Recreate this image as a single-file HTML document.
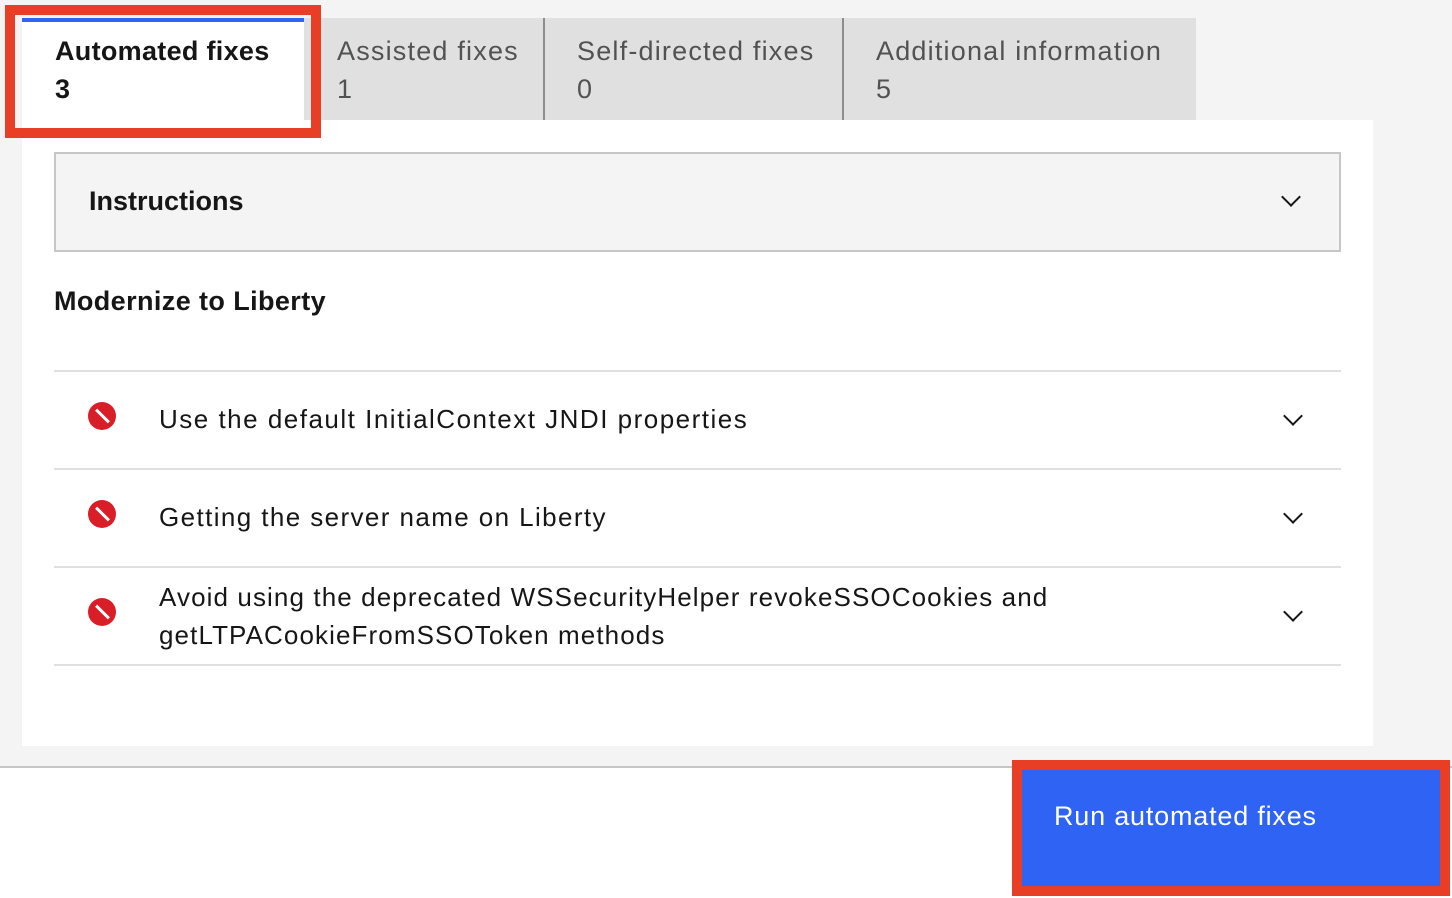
<!DOCTYPE html>
<html><head><style>
*{margin:0;padding:0;box-sizing:border-box}
body{width:1452px;height:898px;background:#f4f4f4;font-family:"Liberation Sans",sans-serif;position:relative;overflow:hidden;color:#161616}
.abs{position:absolute}
.tab{position:absolute;top:18px;height:102px;background:#e0e0e0;color:#525252;font-size:27px;line-height:52px;padding:7px 0 0 33px;letter-spacing:1.2px}
.sep{position:absolute;top:18px;width:2px;height:102px;background:#8d8d8d}
.row{position:absolute;left:54px;width:1287px;border-bottom:2px solid #e0e0e0;font-size:26px;letter-spacing:1.4px}
.ic{position:absolute;left:34px;width:28px;height:28px;border-radius:50%;background:#da1e28}
.ic:after{content:"";position:absolute;left:12.5px;top:5px;width:3px;height:18px;background:#fff;transform:rotate(-45deg)}
.chev{position:absolute;right:41px;width:14px;height:14px;border-right:2.5px solid #161616;border-bottom:2.5px solid #161616;transform:rotate(45deg)}
</style></head><body>
<div class="tab" style="left:304px;width:240px">Assisted fixes<br><span style="position:relative;top:-14px">1</span></div>
<div class="tab" style="left:544px;width:299px">Self-directed fixes<br><span style="position:relative;top:-14px">0</span></div>
<div class="tab" style="left:843px;width:353px">Additional information<br><span style="position:relative;top:-14px">5</span></div>
<div class="sep" style="left:543px"></div><div class="sep" style="left:842px"></div>
<div class="abs" style="left:22px;top:120px;width:1351px;height:626px;background:#fff"></div>
<div class="abs" style="left:22px;top:18px;width:282px;height:112px;background:#fff;border-top:4px solid #2f63f4;font-size:27px;font-weight:bold;line-height:52px;padding:3px 0 0 33px;letter-spacing:0.3px">Automated fixes<br><span style="position:relative;top:-14px">3</span></div>
<div class="abs" style="left:5px;top:5px;width:316px;height:133px;border:10px solid #e93e26"></div>
<div class="abs" style="left:54px;top:152px;width:1287px;height:100px;background:#f4f4f4;border:2px solid #c6c6c6">
<div class="abs" style="left:33px;top:32px;font-size:27px;font-weight:bold">Instructions</div>
<div class="chev" style="top:36px;right:41px"></div></div>
<div class="abs" style="left:54px;top:286px;font-size:27px;font-weight:bold;letter-spacing:0.4px">Modernize to Liberty</div>
<div class="abs" style="left:54px;top:370px;width:1287px;height:2px;background:#e0e0e0"></div>
<div class="row" style="top:372px;height:98px"><div class="ic" style="top:30px"></div><div class="abs" style="left:105px;top:32px;letter-spacing:1.5px">Use the default InitialContext JNDI properties</div><div class="chev" style="top:37px"></div></div>
<div class="row" style="top:470px;height:98px"><div class="ic" style="top:30px"></div><div class="abs" style="left:105px;top:32px">Getting the server name on Liberty</div><div class="chev" style="top:37px"></div></div>
<div class="row" style="top:568px;height:98px"><div class="ic" style="top:30px"></div><div class="abs" style="left:105px;top:10px;line-height:38px;letter-spacing:1.1px">Avoid using the deprecated WSSecurityHelper revokeSSOCookies and<br>getLTPACookieFromSSOToken methods</div><div class="chev" style="top:37px"></div></div>
<div class="abs" style="left:0;top:766px;width:1452px;height:132px;background:#fff;border-top:2px solid #c6c6c6"></div>
<div class="abs" style="left:1012px;top:760px;width:438px;height:136px;border:10px solid #e93e26;background:#2f63f4;color:#fff;font-size:27px;padding:31px 0 0 32px;letter-spacing:0.8px">Run automated fixes</div>
</body></html>
